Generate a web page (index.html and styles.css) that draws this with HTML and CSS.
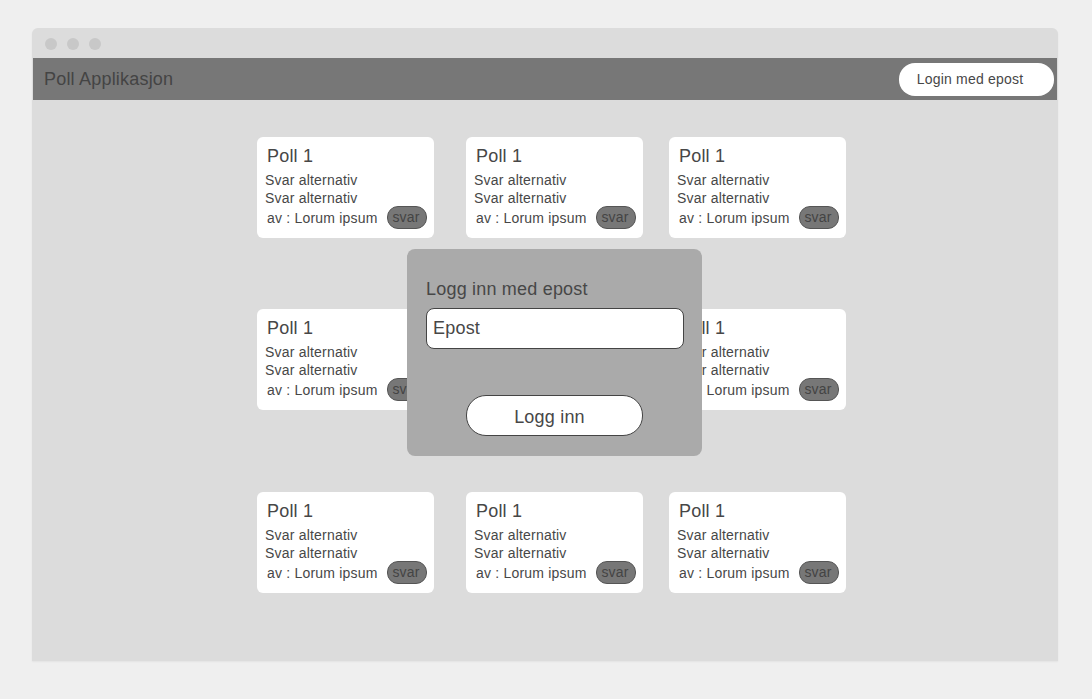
FILE: index.html
```html
<!DOCTYPE html>
<html>
	<head>
		<meta charset="UTF-8">
		<meta name="viewport" content="width=device-width, initial-scale=1.0">
		<title>Poll Applikasjon</title>
		<link rel="stylesheet" href="styles.css">
	</head>
	<body>
		<div class="vindu">
			<div class="tittellinje">
				<span class="prikk"></span>
				<span class="prikk"></span>
				<span class="prikk"></span>
			</div>
			<header class="topp">
				<div class="logo">Poll Applikasjon</div>
				<button class="login-knapp">Login med epost</button>
			</header>

			<main class="innhold">
				<div class="poll-grid">
					<div class="poll">
						<h3>Poll 1</h3>
						<p>Svar alternativ</p>
						<p>Svar alternativ</p>
						<div class="bunn"><span>av : Lorum ipsum</span><span class="svar">svar</span></div>
					</div>
					<div class="poll">
						<h3>Poll 1</h3>
						<p>Svar alternativ</p>
						<p>Svar alternativ</p>
						<div class="bunn"><span>av : Lorum ipsum</span><span class="svar">svar</span></div>
					</div>
					<div class="poll">
						<h3>Poll 1</h3>
						<p>Svar alternativ</p>
						<p>Svar alternativ</p>
						<div class="bunn"><span>av : Lorum ipsum</span><span class="svar">svar</span></div>
					</div>
					<div class="poll">
						<h3>Poll 1</h3>
						<p>Svar alternativ</p>
						<p>Svar alternativ</p>
						<div class="bunn"><span>av : Lorum ipsum</span><span class="svar">svar</span></div>
					</div>
					<div class="poll">
						<h3>Poll 1</h3>
						<p>Svar alternativ</p>
						<p>Svar alternativ</p>
						<div class="bunn"><span>av : Lorum ipsum</span><span class="svar">svar</span></div>
					</div>
					<div class="poll">
						<h3>Poll 1</h3>
						<p>Svar alternativ</p>
						<p>Svar alternativ</p>
						<div class="bunn"><span>av : Lorum ipsum</span><span class="svar">svar</span></div>
					</div>
					<div class="poll">
						<h3>Poll 1</h3>
						<p>Svar alternativ</p>
						<p>Svar alternativ</p>
						<div class="bunn"><span>av : Lorum ipsum</span><span class="svar">svar</span></div>
					</div>
					<div class="poll">
						<h3>Poll 1</h3>
						<p>Svar alternativ</p>
						<p>Svar alternativ</p>
						<div class="bunn"><span>av : Lorum ipsum</span><span class="svar">svar</span></div>
					</div>
					<div class="poll">
						<h3>Poll 1</h3>
						<p>Svar alternativ</p>
						<p>Svar alternativ</p>
						<div class="bunn"><span>av : Lorum ipsum</span><span class="svar">svar</span></div>
					</div>
				</div>

				<!-- innloggingsvindu -->
				<div class="modal">
					<h2>Logg inn med epost</h2>
					<div class="felt">Epost</div>
					<button class="logg-inn">Logg inn</button>
				</div>
			</main>
		</div>
	</body>
</html>
```

FILE: styles.css
```css
body {
	margin: 0;
	padding: 28px 34px 38px 32px;
	background-color: #efefef;
	font-family: "Liberation Sans", Arial, sans-serif;
	color: #474747;
	letter-spacing: 0.2px;
}

.vindu {
	width: 1026px;
	background-color: #dcdcdc;
	border-radius: 6px 6px 0 0;
	box-shadow: 0 1px 2px rgba(0, 0, 0, 0.05);
}

.tittellinje {
	height: 30px;
	display: flex;
	align-items: center;
	gap: 10px;
	padding-left: 13px;
}

.prikk {
	width: 12px;
	height: 12px;
	border-radius: 50%;
	background-color: #c8c8c8;
	margin-top: 2px;
}

.topp {
	height: 42px;
	margin: 0 1px;
	background-color: #777;
	display: flex;
	align-items: center;
	justify-content: space-between;
	padding: 0 3px 0 11px;
}

.logo {
	font-size: 18px;
	color: #444;
}

.login-knapp {
	width: 155px;
	height: 33px;
	border: none;
	border-radius: 16px;
	background-color: #fff;
	font-family: inherit;
	font-size: 14px;
	letter-spacing: 0.2px;
	color: #474747;
	padding: 0 13px 0 0;
}

.innhold {
	position: relative;
	height: 524px;
	padding: 37px 0 0 225px;
}

.poll-grid {
	display: grid;
	grid-template-columns: 209px 203px 177px;
	grid-template-rows: 172px 183px 101px;
}

.poll {
	width: 177px;
	height: 101px;
	box-sizing: border-box;
	background-color: #fff;
	border-radius: 6px;
	padding: 9px 8px 0 8px;
}

.poll h3 {
	margin: 0 0 4px 2px;
	font-size: 18px;
	font-weight: normal;
	line-height: 21px;
}

.poll p {
	margin: 0;
	font-size: 14px;
	line-height: 18px;
}

.bunn {
	display: flex;
	justify-content: space-between;
	align-items: center;
	margin-top: -1px;
	padding-left: 2px;
	font-size: 14px;
}

.svar {
	width: 38px;
	height: 21px;
	line-height: 21px;
	text-align: center;
	background-color: #777;
	border: 1px solid #555;
	border-radius: 11px;
	color: #444;
	margin-right: -1px;
	padding-right: 2px;
	box-sizing: content-box;
	width: 36px;
}

.modal {
	position: absolute;
	left: 375px;
	top: 149px;
	width: 295px;
	height: 207px;
	box-sizing: border-box;
	background-color: #aaa;
	border-radius: 8px;
	padding: 29px 18px 0 19px;
	display: flex;
	flex-direction: column;
}

.modal h2 {
	margin: 0 0 8px 0;
	font-size: 18px;
	font-weight: normal;
	line-height: 22px;
}

.felt {
	height: 41px;
	box-sizing: border-box;
	background-color: #fff;
	border: 1px solid #444;
	border-radius: 8px;
	padding: 0 6px;
	font-size: 18px;
	line-height: 38px;
}

.logg-inn {
	align-self: flex-start;
	margin-top: 46px;
	margin-left: 40px;
	width: 177px;
	height: 41px;
	background-color: #fff;
	border: 1px solid #444;
	border-radius: 20px;
	font-family: inherit;
	font-size: 18px;
	letter-spacing: 0.2px;
	color: #474747;
	padding: 3px 10px 0 0;
}
```
